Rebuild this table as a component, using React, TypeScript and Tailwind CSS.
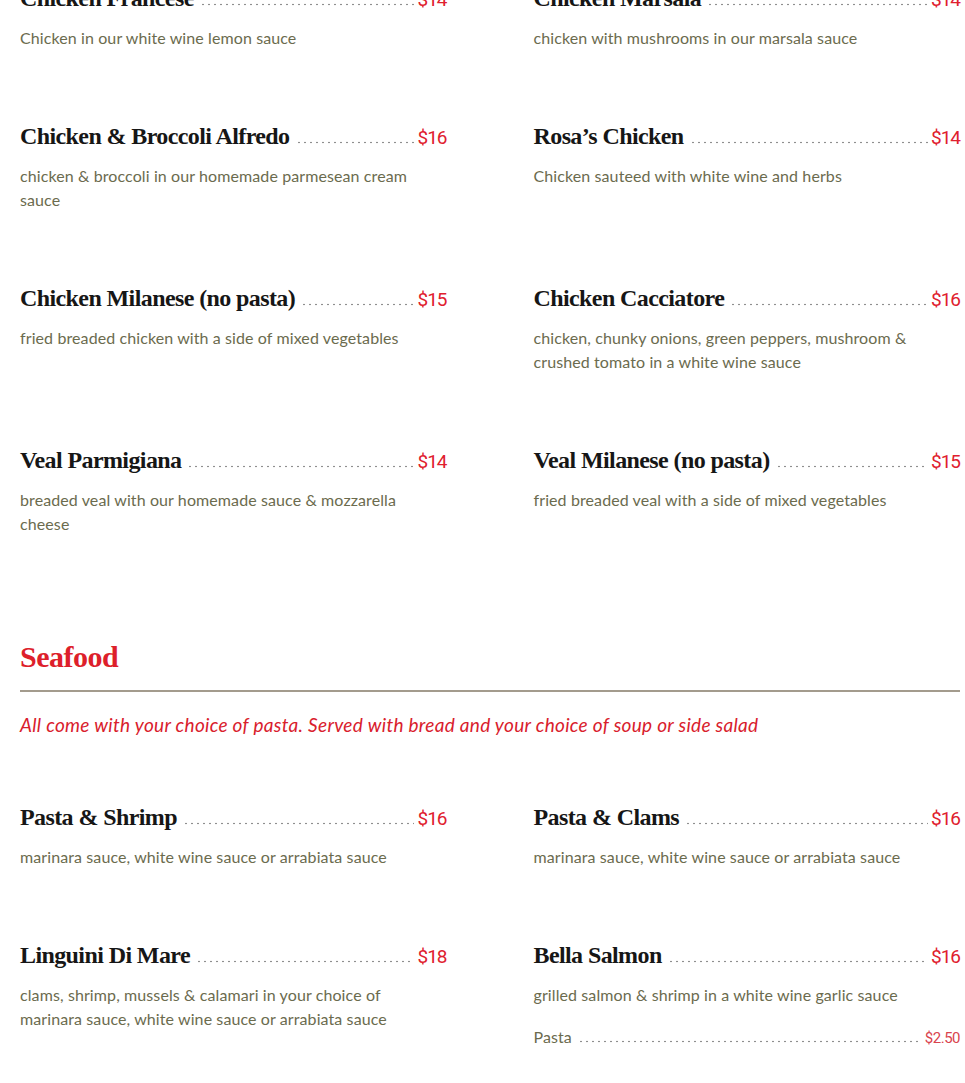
import React from "react";

type Item = { name: string; price: string; desc: string; extra?: { name: string; price: string } };

const rowsTop: Item[][] = [
  [
    { name: "Chicken Francese", price: "$14", desc: "Chicken in our white wine lemon sauce" },
    { name: "Chicken Marsala", price: "$14", desc: "chicken with mushrooms in our marsala sauce" },
  ],
  [
    { name: "Chicken & Broccoli Alfredo", price: "$16", desc: "chicken & broccoli in our homemade parmesean cream sauce" },
    { name: "Rosa’s Chicken", price: "$14", desc: "Chicken sauteed with white wine and herbs" },
  ],
  [
    { name: "Chicken Milanese (no pasta)", price: "$15", desc: "fried breaded chicken with a side of mixed vegetables" },
    { name: "Chicken Cacciatore", price: "$16", desc: "chicken, chunky onions, green peppers, mushroom & crushed tomato in a white wine sauce" },
  ],
  [
    { name: "Veal Parmigiana", price: "$14", desc: "breaded veal with our homemade sauce & mozzarella cheese" },
    { name: "Veal Milanese (no pasta)", price: "$15", desc: "fried breaded veal with a side of mixed vegetables" },
  ],
];

const seafood: Item[] = [
  { name: "Pasta & Shrimp", price: "$16", desc: "marinara sauce, white wine sauce or arrabiata sauce" },
  { name: "Pasta & Clams", price: "$16", desc: "marinara sauce, white wine sauce or arrabiata sauce" },
  { name: "Linguini Di Mare", price: "$18", desc: "clams, shrimp, mussels & calamari in your choice of marinara sauce, white wine sauce or arrabiata sauce" },
  {
    name: "Bella Salmon",
    price: "$16",
    desc: "grilled salmon & shrimp in a white wine garlic sauce",
    extra: { name: "Pasta", price: "$2.50" },
  },
];

function Dots() {
  return (
    <div className="flex-1 h-[3px] ml-[6px] mr-[3px] bg-[radial-gradient(circle,#8f8f8f_0.75px,transparent_1.15px)] bg-[length:6px_3px] bg-repeat-x" />
  );
}

function MenuItem({ item }: { item: Item }) {
  return (
    <div className="pb-[70px]">
      <div className="flex items-baseline h-8">
        <span className="font-['Liberation_Serif',serif] font-bold text-[24px] leading-8 tracking-[-0.6px] text-[#161616] whitespace-nowrap">
          {item.name}
        </span>
        <Dots />
        <span className="font-['Roboto',sans-serif] text-[19px] leading-8 tracking-[-1px] text-[#e0202e]">
          {item.price}
        </span>
      </div>
      <p className="mt-3 font-['Lato',sans-serif] text-[16px] leading-6 tracking-[0.1px] text-[#6b6b4e]">{item.desc}</p>
      {item.extra && (
        <div className="mt-[18px] flex items-baseline h-6">
          <span className="font-['Lato',sans-serif] text-[16px] leading-6 tracking-[0.1px] text-[#6b6b4e]">{item.extra.name}</span>
          <Dots />
          <span className="font-['Roboto',sans-serif] text-[15px] leading-6 tracking-[-0.5px] text-[#d9434d]">
            {item.extra.price}
          </span>
        </div>
      )}
    </div>
  );
}

export default function App() {
  return (
    <div className="bg-white w-[965px] h-[1083px] overflow-hidden">
      <div className="mt-[-18px] px-5 w-[980px]">
        <div className="w-[940px]">
          <div className="grid grid-cols-2 gap-x-[87px]">
            {rowsTop.flat().map((it, i) => (
              <MenuItem key={i} item={it} />
            ))}
          </div>
          <h2 className="mt-[31px] font-['Liberation_Serif',serif] font-bold text-[30px] leading-10 tracking-[-0.5px] text-[#dd1f2b]">
            Seafood
          </h2>
          <div className="mt-[13px] h-[2px] bg-[#a39b8d]" />
          <p className="mt-[21px] font-['Lato',sans-serif] italic text-[19px] leading-6 tracking-[0.3px] text-[#d9202c]">
            All come with your choice of pasta. Served with bread and your choice of soup or side salad
          </p>
          <div className="mt-16 grid grid-cols-2 gap-x-[87px]">
            {seafood.map((it, i) => (
              <MenuItem key={i} item={it} />
            ))}
          </div>
        </div>
      </div>
    </div>
  );
}
